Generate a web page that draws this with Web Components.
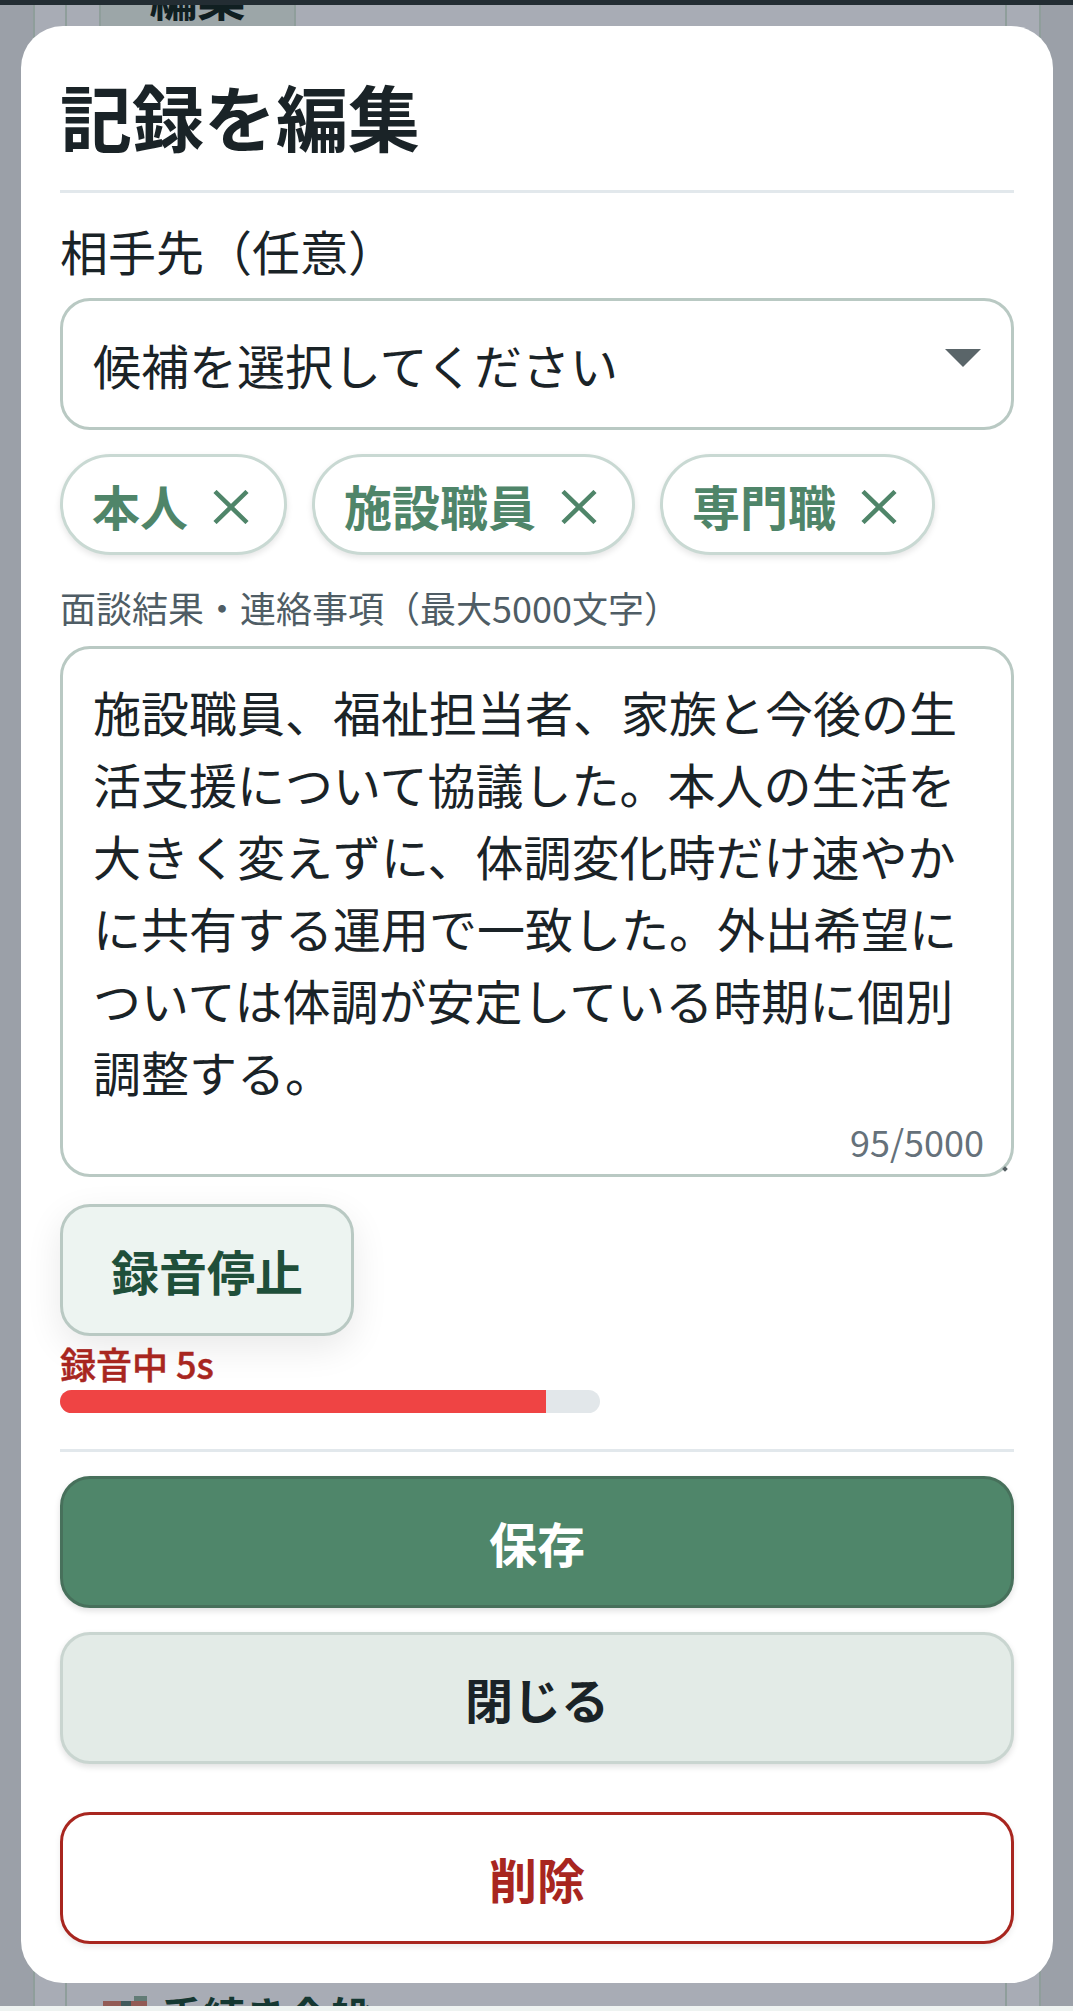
<!DOCTYPE html>
<html lang="ja">
<head>
<meta charset="utf-8">
<title>記録を編集</title>
<style>
html,body{margin:0;padding:0;background:#eef3f1}
body{font-family:"Noto Sans CJK JP","Noto Sans",sans-serif;color:#1a2327}
</style>
</head>
<body>
<app-shell>
  <under-page slot="under"></under-page>
  <record-modal slot="modal" heading="記録を編集">
    <field-label>相手先（任意）</field-label>
    <select-field>候補を選択してください</select-field>
    <chip-row>
      <chip-tag>本人</chip-tag>
      <chip-tag>施設職員</chip-tag>
      <chip-tag>専門職</chip-tag>
    </chip-row>
    <helper-text>面談結果・連絡事項（最大5000文字）</helper-text>
    <note-area count="95/5000">施設職員、福祉担当者、家族と今後の生活支援について協議した。本人の生活を大きく変えずに、体調変化時だけ速やかに共有する運用で一致した。外出希望については体調が安定している時期に個別調整する。</note-area>
    <rec-button>録音停止</rec-button>
    <rec-status percent="90">録音中 5s</rec-status>
    <modal-rule></modal-rule>
    <action-button kind="primary">保存</action-button>
    <action-button kind="neutral">閉じる</action-button>
    <action-button kind="danger">削除</action-button>
  </record-modal>
</app-shell>
<script>
function def(name, css, html, extra){
  const t=document.createElement('template');
  t.innerHTML='<style>'+css+'</style>'+html;
  customElements.define(name,class extends HTMLElement{
    constructor(){super();this.attachShadow({mode:'open'}).appendChild(t.content.cloneNode(true));}
    connectedCallback(){ if(extra) extra(this); }
  });
}
def('app-shell',`
  :host{display:flex;flex-direction:column;width:1073px;height:2011px;overflow:hidden;background:#eef3f1}
  .top{height:5px;flex:none;background:#232d33}
  .main{flex:1;min-height:0;position:relative;overflow:hidden}
  .dim{position:absolute;inset:0;background:rgba(15,23,42,.35);box-sizing:border-box;padding:21px 20px 0 21px;display:flex;flex-direction:column}
  .foot{height:5px;flex:none;background:#eef3f1}
`,`<div class="top"></div><div class="main"><slot name="under"></slot><div class="dim"><slot name="modal"></slot></div></div><div class="foot"></div>`);

def('under-page',`
  :host{display:flex;height:100%;background:#e6eaec;justify-content:flex-start}
  .outer{margin-left:33px;width:1008px;box-sizing:border-box;border-left:2px solid #d4e6d7;border-right:2px solid #d4e6d7;background:#fafcff;padding:0 32px 0 30px;display:flex}
  .inner{flex:1;box-sizing:border-box;border-left:2px solid #d4e6d7;border-right:2px solid #d4e6d7;padding:0 32px;display:flex;flex-direction:column;justify-content:space-between;overflow:hidden}
  .edit{width:197px;height:132px;margin-top:-76px;box-sizing:border-box;background:#e8f3eb;border:2px solid #d4e6d7;border-radius:30px;display:flex;align-items:center;justify-content:center;font:700 48px/1 "Noto Sans CJK JP",sans-serif;color:#12241c}
  .bottom{display:flex;align-items:flex-start;gap:18px;height:9px;margin-left:4px;font:700 42px/1 "Noto Sans CJK JP",sans-serif;color:#1a4a36}
  .bottom svg{flex:none;margin-top:-1px}
  .bottom span{margin-top:-3px;white-space:nowrap;margin-left:-4px}
`,`<div class="outer"><div class="inner"><div class="edit">編集</div><div class="bottom"><svg width="44" height="10" viewBox="0 0 44 10"><rect x="0" y="5" width="44" height="5" fill="#d9806c"/><rect x="31" y="0" width="13" height="5" fill="#8fb39f"/><rect x="18" y="5" width="10" height="5" fill="#5d7f75"/></svg><span>手続き全般</span></div></div></div>`);

def('record-modal',`
  :host{display:block;width:1032px;height:1957px;box-sizing:border-box;background:#fff;border-radius:42px;padding:39px;color:#1a2327}
  h2{margin:0;font:700 72px/100px "Noto Sans CJK JP",sans-serif;color:#1a2327;height:100px;padding-bottom:25px;border-bottom:3px solid #e2e8ec;box-sizing:content-box}
  .body{display:flex;flex-direction:column}
`,`<h2></h2><div class="body"><slot></slot></div>`,el=>{el.shadowRoot.querySelector('h2').textContent=el.getAttribute('heading');});

def('field-label',`
  :host{display:block;font:400 48px/72px "Noto Sans CJK JP",sans-serif;color:#1a2327;margin-top:21px;margin-bottom:12px;height:72px}
`,`<slot></slot>`);

def('select-field',`
  :host{display:flex;align-items:center;justify-content:space-between;height:132px;box-sizing:border-box;border:3px solid #b9c9c3;border-radius:30px;padding:0 30px 0 30px;font:400 48px/1 "Noto Sans CJK JP",sans-serif;color:#1a2327;background:#fff}
  svg{flex:none;margin-top:-13px}
`,`<slot></slot><svg width="36" height="18" viewBox="0 0 36 18"><path d="M0 0H36L18 18Z" fill="#5a6569"/></svg>`);

def('chip-row',`:host{display:flex;gap:25px;margin-top:24px}`,`<slot></slot>`);

def('chip-tag',`
  :host{display:inline-flex;align-items:center;gap:25px;height:101px;box-sizing:border-box;border:3px solid #c9d9d3;border-radius:51px;padding:0 35px 0 29px;background:#fff;font:700 48px/1 "Noto Sans CJK JP",sans-serif;color:#4f8569;box-shadow:0 3px 6px rgba(0,0,0,.1);white-space:nowrap}
  svg{flex:none;display:block;margin-top:4px}
`,`<slot></slot><svg width="36" height="34" viewBox="0 0 36 34"><path d="M2 1.5L34 32.5M34 1.5L2 32.5" stroke="#4f8569" stroke-width="4.5" fill="none"/></svg>`);

def('helper-text',`
  :host{display:block;font:400 36px/54px "Noto Sans CJK JP",sans-serif;color:#4f5d65;margin-top:25px;margin-bottom:12px;height:54px}
`,`<slot></slot>`);

def('note-area',`
  :host{display:block;position:relative;height:531px;box-sizing:border-box;border:3px solid #b9c9c3;border-radius:30px;padding:26px 30px 30px;background:#fff;font:400 48px/72px "Noto Sans CJK JP",sans-serif;color:#1a2327}
  .count{position:absolute;right:27px;bottom:6px;font:400 36px/54px "Noto Sans CJK JP",sans-serif;color:#65717a}
  .grip{position:absolute;right:4px;bottom:3px;width:4px;height:4px;background:#555f63;transform:rotate(45deg)}
`,`<slot></slot><div class="count"></div><div class="grip"></div>`,el=>{el.shadowRoot.querySelector('.count').textContent=el.getAttribute('count');});

def('rec-button',`
  :host{display:flex;align-items:center;justify-content:center;align-self:flex-start;width:294px;height:132px;box-sizing:border-box;margin-top:27px;border:3px solid #b9c9c3;border-radius:30px;background:#edf4f1;font:700 48px/1 "Noto Sans CJK JP",sans-serif;color:#1f4f3a;box-shadow:0 12px 36px rgba(0,0,0,.09)}
`,`<slot></slot>`);

def('rec-status',`
  :host{display:block;margin-top:3px}
  .t{font:500 36px/48px "Noto Sans CJK JP",sans-serif;-webkit-text-stroke:.5px #a8261f;color:#a8261f;height:48px}
  .track{width:540px;height:23px;border-radius:12px;background:#e2e7ea;overflow:hidden;margin-top:3px}
  .fill{height:100%;background:#ef4444}
`,`<div class="t"><slot></slot></div><div class="track"><div class="fill"></div></div>`,el=>{el.shadowRoot.querySelector('.fill').style.width=el.getAttribute('percent')+'%';});

def('modal-rule',`:host{display:block;height:3px;background:#e2e8ec;margin-top:36px;margin-bottom:24px}`,``);

def('action-button',`
  :host{display:flex;align-items:center;justify-content:center;height:132px;box-sizing:border-box;border-radius:30px;border:3px solid;font:700 48px/1 "Noto Sans CJK JP",sans-serif}
  :host([kind=primary]){background:#4f866a;border-color:#47705b;color:#fff;box-shadow:0 3px 6px rgba(0,0,0,.12)}
  :host([kind=neutral]){background:#e3ebe7;border-color:#c9d5d0;color:#1a2327;margin-top:24px;box-shadow:0 3px 6px rgba(0,0,0,.12)}
  :host([kind=danger]){background:#fff;border-color:#a8261f;color:#a8261f;margin-top:48px;box-shadow:0 3px 6px rgba(0,0,0,.08)}
`,`<slot></slot>`);
</script>
</body>
</html>
